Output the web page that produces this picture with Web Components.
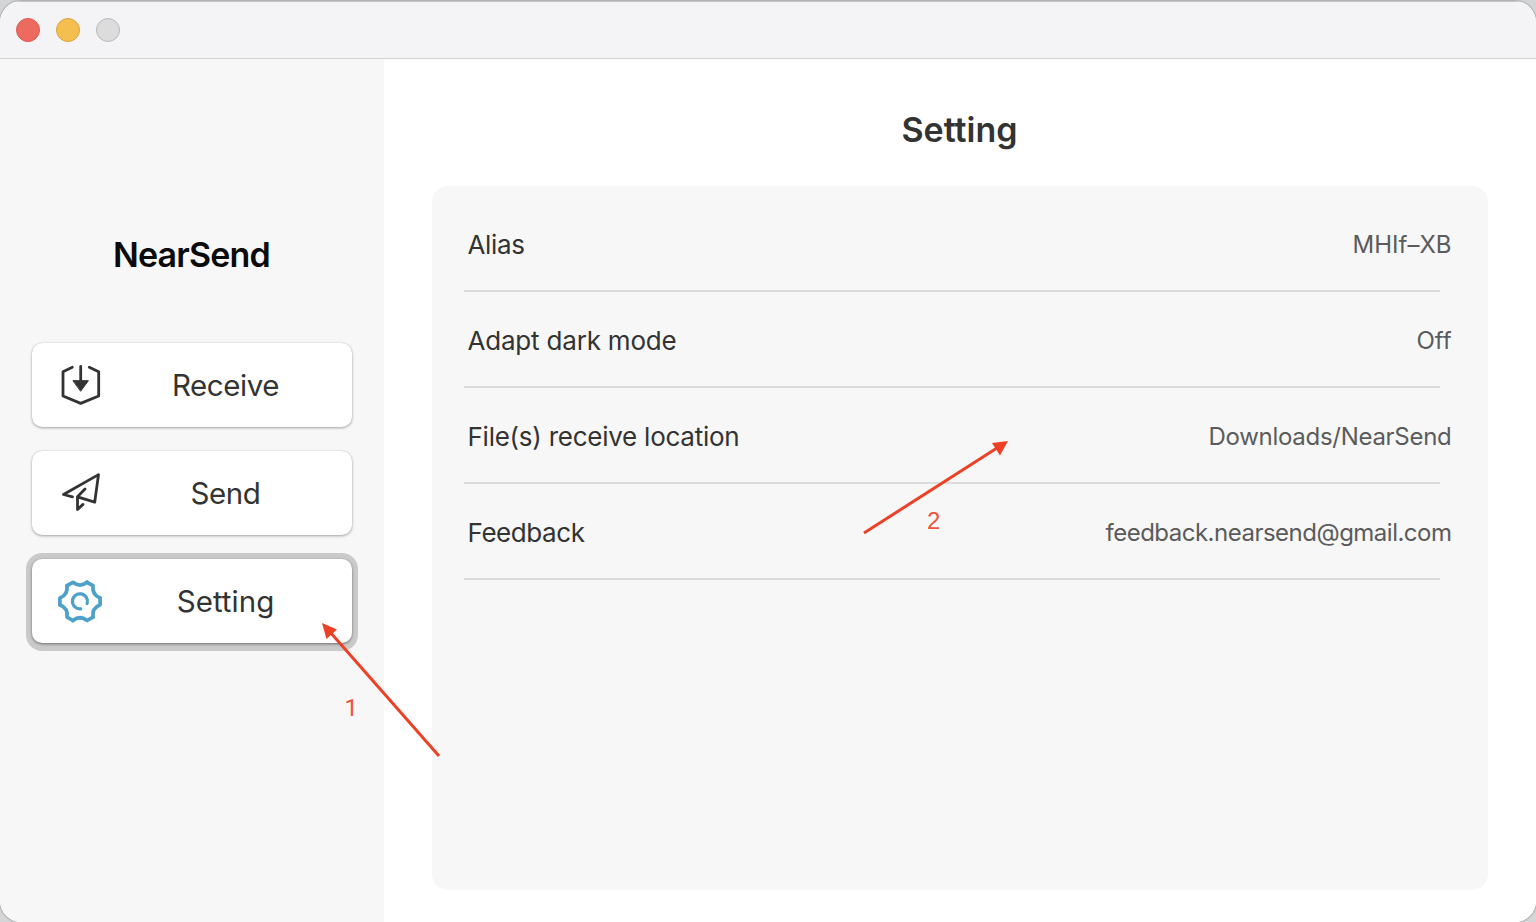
<!DOCTYPE html>
<html lang="en"><head><meta charset="utf-8"><title>NearSend</title>
<style>html,body{margin:0;height:100%;overflow:hidden;background:#d4d5d6;font-family:Inter,"Liberation Sans",sans-serif}</style></head>
<body><near-window></near-window>
<script>
const define = (name, html, setup) => {
  const t = document.createElement('template');
  t.innerHTML = html;
  customElements.define(name, class extends HTMLElement {
    constructor() { super(); this.attachShadow({mode:'open'}).append(t.content.cloneNode(true)); }
    connectedCallback() { if (setup) setup(this); }
  });
};
// A label tracked so that it spans a given width.
define('fit-text', `<style>:host{display:inline-block;white-space:nowrap}span{display:inline-block}</style><span><slot></slot></span>`, el => {
  requestAnimationFrame(() => {
    const s = el.shadowRoot.querySelector('span'), n = el.textContent.length;
    const d = (+el.getAttribute('w') - s.getBoundingClientRect().width) / n;
    s.style.letterSpacing = d + 'px';
  });
});
define('traffic-lights', `<style>:host{display:flex;gap:16px;padding-left:16px}i{box-sizing:border-box;width:24px;height:24px;border-radius:50%;border:1px solid #d95b50;background:#ed6a5f}i:nth-of-type(2){background:#f5bf4f;border-color:#dba33d}i:nth-of-type(3){background:#dcdcdd;border-color:#b9b9bb}</style><i></i><i></i><i></i>`);
define('nav-button', `<style>:host{display:flex;align-items:center;box-sizing:border-box;width:320px;height:84px;border-radius:10px;background:#fff;color:#333;box-shadow:0 1px 3px #0005,0 0 1px #0003}
:host([active]){box-shadow:0 1px 3px #0007,0 0 0 6px #cacaca,0 2px 0 6px #cacaca}
::slotted(svg){display:block;width:60px;height:60px;margin-left:18px;flex:none}
.l{width:231px;text-align:center;font-size:29.5px;line-height:36px}</style><slot name="icon"></slot><div class="l"><slot></slot></div>`);
define('setting-row', `<style>:host{display:flex;box-sizing:border-box;height:96px;align-items:center;justify-content:space-between;position:relative;padding:3px 5px 0 3.5px;margin-right:-1px;font-size:26px;color:#333}
.v{color:#5b5b5b;font-size:24px;margin-right:-15.5px}
hr{position:absolute;left:0;right:1px;bottom:-1px;margin:0;border:0;height:2px;background:#dcdcdd}</style><slot></slot><div class="v"><slot name="value"></slot></div><hr>`);
define('side-bar', `<style>:host{display:flex;flex-direction:column;align-items:center;box-sizing:border-box;width:384px;background:#f7f7f7;padding-top:174px}
h1{margin:0 1px 66px 0;font-size:34px;line-height:44px;font-weight:600;color:#0b0b0b}nav{display:flex;flex-direction:column;gap:24px}</style>
<h1><fit-text w="157">NearSend</fit-text></h1><nav>
<nav-button><svg slot="icon" viewBox="50 355 60 60" fill="none" stroke="#333" stroke-width="2.8" stroke-linecap="round" stroke-linejoin="round"><path d="M72.3 367.3 63 371.8V396L80.7 403.4 98.7 396V371.8L89.3 367.3M80.7 366.5V382"/><path d="M73.3 380.7H88.4L80.8 391Z" fill="#333" stroke-width="1"/></svg><fit-text w="107">Receive</fit-text></nav-button>
<nav-button><svg slot="icon" viewBox="50 463 60 60" fill="none" stroke="#333" stroke-width="2.8" stroke-linecap="round" stroke-linejoin="round"><path d="M72.5 496.8 63.5 494.5 98.5 474.6 94.7 502.2 77.5 496.8V509.5L83 504.4M77.5 496.8 85 489"/></svg><fit-text w="70">Send</fit-text></nav-button>
<nav-button active><svg slot="icon" viewBox="50 571.3 60 60" fill="none" stroke="#4da0ca" stroke-width="3.7" stroke-linecap="round" stroke-linejoin="round"><g transform="translate(80 601.7)"><path id="g" d="M20.1-3.4V3.4Q11.8 6.8 13 15.7"/><use href="#g" transform="rotate(60)"/><use href="#g" transform="rotate(120)"/><use href="#g" transform="rotate(180)"/><use href="#g" transform="rotate(240)"/><use href="#g" transform="rotate(300)"/><path d="M.7 7.4A7.5 7.5 0 1 1 7.1 2.2" stroke-width="3.2"/></g></svg><fit-text w="97.5">Setting</fit-text></nav-button></nav>`);
define('setting-page', `<style>:host{display:flex;flex:1;flex-direction:column;box-sizing:border-box;padding:48px 48px 32px;background:#fff}
h2{margin:0 1px 33px 0;text-align:center;font-size:34px;line-height:46px;font-weight:600;color:#333}
section{box-sizing:border-box;flex:1;background:#f7f7f7;border-radius:16px;padding:9px 48px 0 32px}</style>
<h2><fit-text w="116">Setting</fit-text></h2><section>
<setting-row><fit-text w="57">Alias</fit-text><fit-text slot="value" w="99">MHIf–XB</fit-text></setting-row>
<setting-row><fit-text w="209">Adapt dark mode</fit-text><fit-text slot="value" w="35">Off</fit-text></setting-row>
<setting-row><fit-text w="272">File(s) receive location</fit-text><fit-text slot="value" w="243">Downloads/NearSend</fit-text></setting-row>
<setting-row><fit-text w="117">Feedback</fit-text><fit-text slot="value" w="346">feedback.nearsend@gmail.com</fit-text></setting-row></section>`);
define('note-layer', `<style>:host{position:absolute;inset:0;pointer-events:none}svg{display:block}text{font:24px "Liberation Sans",sans-serif;fill:#f0553b}text.one{font-family:Roboto,sans-serif}</style>
<svg width="1536" height="922" fill="#ed4127" stroke="#ed4127"><path d="M439 756 330 632M864 533 997 448" fill="none" stroke-width="3"/><path d="M322 623 337 629.5 326.5 639Z M1008 441 992 443 1000 455.5Z" stroke="none"/><g stroke="none"><text class="one" x="344.5" y="716">1</text><text x="927" y="528.5">2</text></g></svg>`);
define('near-window', `<style>:host{display:flex;flex-direction:column;position:relative;box-sizing:border-box;width:1536px;height:922px;padding-top:1px}
.w{display:flex;flex-direction:column;flex:1;border-radius:21px;overflow:hidden;box-shadow:0 0 2px #555;background:#fff}
header{display:flex;align-items:center;box-sizing:border-box;height:58px;background:#f4f4f7;border-top:1px solid #c4c4c6;border-bottom:1px solid #d1d1d4}
main{display:flex;flex:1}</style><div class="w"><header><traffic-lights></traffic-lights></header><main><side-bar></side-bar><setting-page></setting-page></main></div><note-layer></note-layer>`);
</script></body></html>
